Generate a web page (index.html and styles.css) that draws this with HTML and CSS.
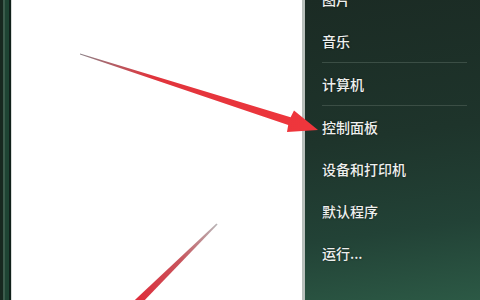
FILE: index.html
```html
<!DOCTYPE html>
<html lang="zh-CN">
<head>
  <meta charset="UTF-8" />
  <title>开始菜单</title>
  <link rel="stylesheet" href="styles.css">
</head>
<body>
  <div class="start-menu">
    <div class="edge"></div>
    <div class="programs"></div>
    <nav class="places">
      <ul class="place-list">
        <li class="place">图片</li>
        <li class="place">音乐</li>
        <li class="sep"></li>
        <li class="place">计算机</li>
        <li class="sep"></li>
        <li class="place">控制面板</li>
        <li class="place">设备和打印机</li>
        <li class="place">默认程序</li>
        <li class="place">运行...</li>
      </ul>
    </nav>
  </div>

  <!-- 标注箭头 -->
  <svg class="marks" width="480" height="300" viewBox="0 0 480 300">
    <defs>
      <linearGradient id="arrow1" gradientUnits="userSpaceOnUse" x1="80" y1="54" x2="317" y2="130">
        <stop offset="0" stop-color="#8c8288"/>
        <stop offset="0.3" stop-color="#e0343c"/>
        <stop offset="1" stop-color="#f0363c"/>
      </linearGradient>
      <linearGradient id="arrow2" gradientUnits="userSpaceOnUse" x1="217" y1="224" x2="135" y2="305">
        <stop offset="0" stop-color="#b8b4b6"/>
        <stop offset="0.45" stop-color="#c8545c"/>
        <stop offset="1" stop-color="#e02a38"/>
      </linearGradient>
    </defs>
    <polygon class="arrow" fill="url(#arrow1)"
      points="80,53.4 290.6,117.3 294,110.5 318,130 287,132 288.2,124.9 80,54.6"/>
    <polygon class="arrow" fill="url(#arrow2)"
      points="216.4,223.6 217.6,224.4 137.6,307.5 132.2,302.5"/>
  </svg>
</body>
</html>
```

FILE: styles.css
```css
:root {
  --verde-oscuro: #1c2e27;
  --texto-menu: #eef0ee;
  --separador: #3b4e45;
  --fuente-base: "Noto Sans CJK SC", "Noto Sans", sans-serif;
}
* { box-sizing: border-box; margin: 0; padding: 0; }
body {
  width: 480px;
  height: 300px;
  overflow: hidden;
  font-family: var(--fuente-base);
  background: #fff;
  position: relative;
}

.start-menu {
  display: flex;
  height: 300px;
}

/* Borde izquierdo del menú */
.edge {
  width: 12px;
  background: linear-gradient(90deg,
    #17281f 0, #17281f 3px,
    #3c5c4c 3px, #3c5c4c 5px,
    #1e4433 5px, #1e4433 9px,
    #10201a 9px, #10201a 11px,
    #d8dcda 11px);
}

.programs {
  flex: 1;
  background: #fff;
}

/* Panel derecho */
.places {
  width: 178px;
  border-left: 3px solid #b9c0bc;
  background: linear-gradient(172deg, #1b2b24 0%, #1e342b 45%, #224236 75%, #2c5945 100%);
  padding-left: 17px;
  overflow: hidden;
}
.place-list {
  list-style: none;
  margin-top: -22px;
  display: flex;
  flex-direction: column;
}
.place {
  height: 42px;
  display: flex;
  align-items: center;
  font-size: 14px;
  font-weight: 500;
  color: var(--texto-menu);
  text-shadow: 0 0 2px rgba(0,0,0,0.6);
}
.sep {
  height: 1px;
  margin-right: 13px;
  background: var(--separador);
}

/* Flechas de anotación */
.marks {
  position: absolute;
  top: 0;
  left: 0;
  pointer-events: none;
}
.arrow {
  filter: blur(0.4px);
}
```
